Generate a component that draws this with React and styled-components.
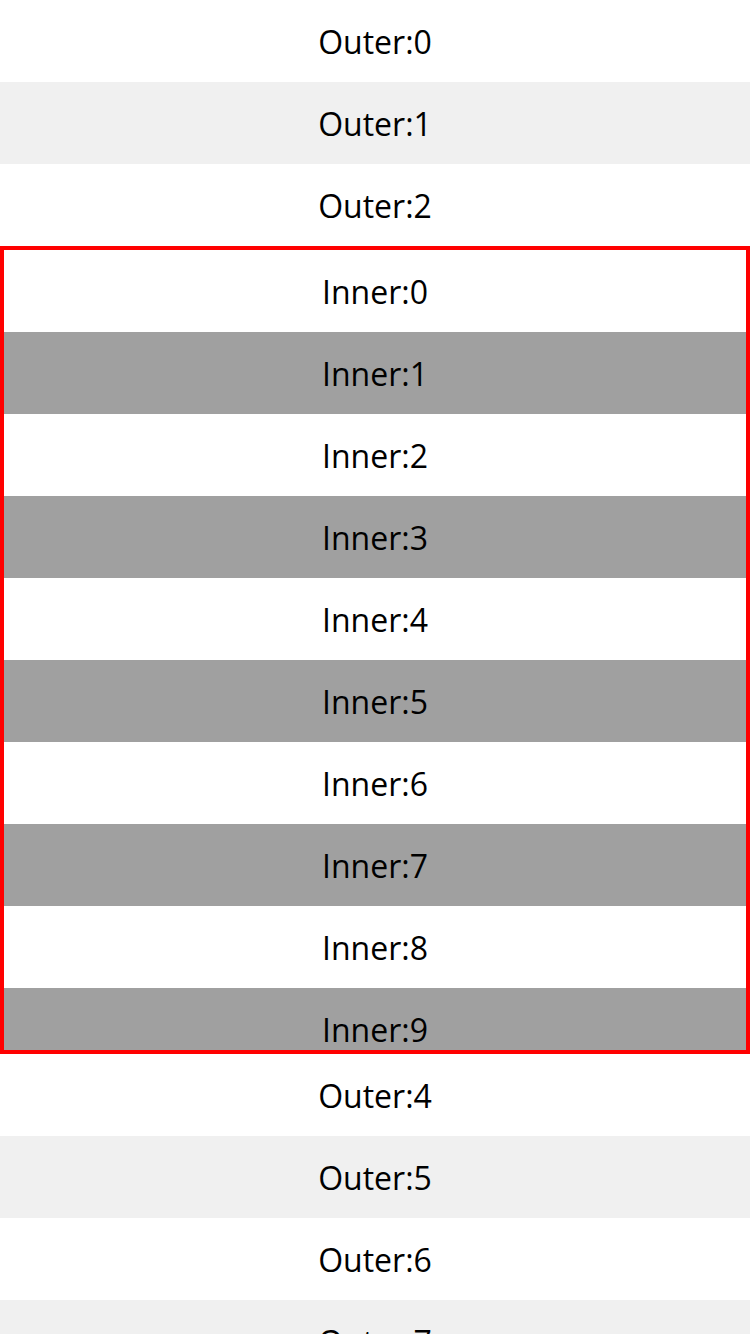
import React from 'react';
import styled, { createGlobalStyle } from 'styled-components';

const GlobalStyle = createGlobalStyle`
  html, body {
    margin: 0;
    padding: 0;
    background: #fff;
  }
  body {
    font-family: "Open Sans", "Noto Sans", sans-serif;
    color: #000;
  }
`;

const OuterList = styled.div`
  height: 1334px;
  overflow: hidden;
`;

const Row = styled.div`
  box-sizing: border-box;
  height: 82px;
  padding-top: 2px;
  line-height: 80px;
  text-align: center;
  font-size: 32px;
  background-color: ${(p) => (p.$odd ? p.$shade : '#fff')};
`;

const InnerBox = styled.div`
  height: 800px;
  border: 4px solid #ff0000;
  overflow: hidden;
`;

const outer = [0, 1, 2, 3, 4, 5, 6, 7];
const inner = [0, 1, 2, 3, 4, 5, 6, 7, 8, 9];

const App = () => {
  return (
    <>
      <GlobalStyle />
      <OuterList>
        {outer.map((i) =>
          i === 3 ? (
            <InnerBox key={i}>
              {inner.map((j) => (
                <Row key={j} $odd={j % 2 === 1} $shade="#a0a0a0">
                  Inner:{j}
                </Row>
              ))}
            </InnerBox>
          ) : (
            <Row key={i} $odd={i % 2 === 1} $shade="#f0f0f0">
              Outer:{i}
            </Row>
          )
        )}
      </OuterList>
    </>
  );
};

export default App;
